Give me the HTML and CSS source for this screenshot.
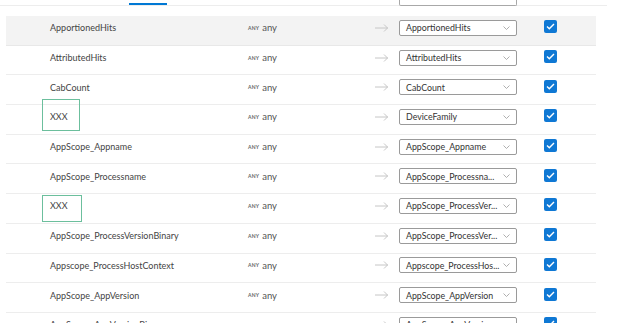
FILE: index.html
```html
<!DOCTYPE html>
<html lang="en">
<head>
    <meta charset="UTF-8">
    <title>Column mapping</title>
    <link rel="stylesheet" href="styles.css">
</head>
<body>
<div class="top-strip">
    <span class="tab-indicator"></span>
    <span class="select-stub"></span>
</div>
<div class="mapping">
    <div class="row selected">
        <div class="name">ApportionedHits</div>
        <div class="type"><span class="type-tag">ANY</span>any</div>
        <div class="arrow"><svg width="14" height="8" viewBox="0 0 14 8"><path d="M0 4h13M9 0.5l3.5 3.5-3.5 3.5" fill="none" stroke="#c6c6c6" stroke-width="1"/></svg></div>
        <div class="select"><span class="select-text">ApportionedHits</span><svg class="chevron" width="7" height="4" viewBox="0 0 7 4"><path d="M0.5 0.5l3 3 3-3" fill="none" stroke="#a6a6a6" stroke-width="0.9"/></svg></div>
        <div class="check"><svg width="9" height="7" viewBox="0 0 9 7"><path d="M1 3.6l2.3 2.2L8 1" fill="none" stroke="#fff" stroke-width="1.4"/></svg></div>
    </div>
    <div class="row">
        <div class="name">AttributedHits</div>
        <div class="type"><span class="type-tag">ANY</span>any</div>
        <div class="arrow"><svg width="14" height="8" viewBox="0 0 14 8"><path d="M0 4h13M9 0.5l3.5 3.5-3.5 3.5" fill="none" stroke="#c6c6c6" stroke-width="1"/></svg></div>
        <div class="select"><span class="select-text">AttributedHits</span><svg class="chevron" width="7" height="4" viewBox="0 0 7 4"><path d="M0.5 0.5l3 3 3-3" fill="none" stroke="#a6a6a6" stroke-width="0.9"/></svg></div>
        <div class="check"><svg width="9" height="7" viewBox="0 0 9 7"><path d="M1 3.6l2.3 2.2L8 1" fill="none" stroke="#fff" stroke-width="1.4"/></svg></div>
    </div>
    <div class="row">
        <div class="name">CabCount</div>
        <div class="type"><span class="type-tag">ANY</span>any</div>
        <div class="arrow"><svg width="14" height="8" viewBox="0 0 14 8"><path d="M0 4h13M9 0.5l3.5 3.5-3.5 3.5" fill="none" stroke="#c6c6c6" stroke-width="1"/></svg></div>
        <div class="select"><span class="select-text">CabCount</span><svg class="chevron" width="7" height="4" viewBox="0 0 7 4"><path d="M0.5 0.5l3 3 3-3" fill="none" stroke="#a6a6a6" stroke-width="0.9"/></svg></div>
        <div class="check"><svg width="9" height="7" viewBox="0 0 9 7"><path d="M1 3.6l2.3 2.2L8 1" fill="none" stroke="#fff" stroke-width="1.4"/></svg></div>
    </div>
    <div class="row">
        <div class="name">XXX<span class="mask mask-tall"></span></div>
        <div class="type"><span class="type-tag">ANY</span>any</div>
        <div class="arrow"><svg width="14" height="8" viewBox="0 0 14 8"><path d="M0 4h13M9 0.5l3.5 3.5-3.5 3.5" fill="none" stroke="#c6c6c6" stroke-width="1"/></svg></div>
        <div class="select"><span class="select-text">DeviceFamily</span><svg class="chevron" width="7" height="4" viewBox="0 0 7 4"><path d="M0.5 0.5l3 3 3-3" fill="none" stroke="#a6a6a6" stroke-width="0.9"/></svg></div>
        <div class="check"><svg width="9" height="7" viewBox="0 0 9 7"><path d="M1 3.6l2.3 2.2L8 1" fill="none" stroke="#fff" stroke-width="1.4"/></svg></div>
    </div>
    <div class="row">
        <div class="name">AppScope_Appname</div>
        <div class="type"><span class="type-tag">ANY</span>any</div>
        <div class="arrow"><svg width="14" height="8" viewBox="0 0 14 8"><path d="M0 4h13M9 0.5l3.5 3.5-3.5 3.5" fill="none" stroke="#c6c6c6" stroke-width="1"/></svg></div>
        <div class="select"><span class="select-text">AppScope_Appname</span><svg class="chevron" width="7" height="4" viewBox="0 0 7 4"><path d="M0.5 0.5l3 3 3-3" fill="none" stroke="#a6a6a6" stroke-width="0.9"/></svg></div>
        <div class="check"><svg width="9" height="7" viewBox="0 0 9 7"><path d="M1 3.6l2.3 2.2L8 1" fill="none" stroke="#fff" stroke-width="1.4"/></svg></div>
    </div>
    <div class="row">
        <div class="name">AppScope_Processname</div>
        <div class="type"><span class="type-tag">ANY</span>any</div>
        <div class="arrow"><svg width="14" height="8" viewBox="0 0 14 8"><path d="M0 4h13M9 0.5l3.5 3.5-3.5 3.5" fill="none" stroke="#c6c6c6" stroke-width="1"/></svg></div>
        <div class="select"><span class="select-text">AppScope_Processna...</span><svg class="chevron" width="7" height="4" viewBox="0 0 7 4"><path d="M0.5 0.5l3 3 3-3" fill="none" stroke="#a6a6a6" stroke-width="0.9"/></svg></div>
        <div class="check"><svg width="9" height="7" viewBox="0 0 9 7"><path d="M1 3.6l2.3 2.2L8 1" fill="none" stroke="#fff" stroke-width="1.4"/></svg></div>
    </div>
    <div class="row">
        <div class="name">XXX<span class="mask mask-short"></span></div>
        <div class="type"><span class="type-tag">ANY</span>any</div>
        <div class="arrow"><svg width="14" height="8" viewBox="0 0 14 8"><path d="M0 4h13M9 0.5l3.5 3.5-3.5 3.5" fill="none" stroke="#c6c6c6" stroke-width="1"/></svg></div>
        <div class="select"><span class="select-text">AppScope_ProcessVer...</span><svg class="chevron" width="7" height="4" viewBox="0 0 7 4"><path d="M0.5 0.5l3 3 3-3" fill="none" stroke="#a6a6a6" stroke-width="0.9"/></svg></div>
        <div class="check"><svg width="9" height="7" viewBox="0 0 9 7"><path d="M1 3.6l2.3 2.2L8 1" fill="none" stroke="#fff" stroke-width="1.4"/></svg></div>
    </div>
    <div class="row">
        <div class="name">AppScope_ProcessVersionBinary</div>
        <div class="type"><span class="type-tag">ANY</span>any</div>
        <div class="arrow"><svg width="14" height="8" viewBox="0 0 14 8"><path d="M0 4h13M9 0.5l3.5 3.5-3.5 3.5" fill="none" stroke="#c6c6c6" stroke-width="1"/></svg></div>
        <div class="select"><span class="select-text">AppScope_ProcessVer...</span><svg class="chevron" width="7" height="4" viewBox="0 0 7 4"><path d="M0.5 0.5l3 3 3-3" fill="none" stroke="#a6a6a6" stroke-width="0.9"/></svg></div>
        <div class="check"><svg width="9" height="7" viewBox="0 0 9 7"><path d="M1 3.6l2.3 2.2L8 1" fill="none" stroke="#fff" stroke-width="1.4"/></svg></div>
    </div>
    <div class="row">
        <div class="name">Appscope_ProcessHostContext</div>
        <div class="type"><span class="type-tag">ANY</span>any</div>
        <div class="arrow"><svg width="14" height="8" viewBox="0 0 14 8"><path d="M0 4h13M9 0.5l3.5 3.5-3.5 3.5" fill="none" stroke="#c6c6c6" stroke-width="1"/></svg></div>
        <div class="select"><span class="select-text">Appscope_ProcessHos...</span><svg class="chevron" width="7" height="4" viewBox="0 0 7 4"><path d="M0.5 0.5l3 3 3-3" fill="none" stroke="#a6a6a6" stroke-width="0.9"/></svg></div>
        <div class="check"><svg width="9" height="7" viewBox="0 0 9 7"><path d="M1 3.6l2.3 2.2L8 1" fill="none" stroke="#fff" stroke-width="1.4"/></svg></div>
    </div>
    <div class="row">
        <div class="name">AppScope_AppVersion</div>
        <div class="type"><span class="type-tag">ANY</span>any</div>
        <div class="arrow"><svg width="14" height="8" viewBox="0 0 14 8"><path d="M0 4h13M9 0.5l3.5 3.5-3.5 3.5" fill="none" stroke="#c6c6c6" stroke-width="1"/></svg></div>
        <div class="select"><span class="select-text">AppScope_AppVersion</span><svg class="chevron" width="7" height="4" viewBox="0 0 7 4"><path d="M0.5 0.5l3 3 3-3" fill="none" stroke="#a6a6a6" stroke-width="0.9"/></svg></div>
        <div class="check"><svg width="9" height="7" viewBox="0 0 9 7"><path d="M1 3.6l2.3 2.2L8 1" fill="none" stroke="#fff" stroke-width="1.4"/></svg></div>
    </div>
    <div class="row">
        <div class="name">AppScope_AppVersionBinary</div>
        <div class="type"><span class="type-tag">ANY</span>any</div>
        <div class="arrow"><svg width="14" height="8" viewBox="0 0 14 8"><path d="M0 4h13M9 0.5l3.5 3.5-3.5 3.5" fill="none" stroke="#c6c6c6" stroke-width="1"/></svg></div>
        <div class="select"><span class="select-text">AppScope_AppVersio...</span><svg class="chevron" width="7" height="4" viewBox="0 0 7 4"><path d="M0.5 0.5l3 3 3-3" fill="none" stroke="#a6a6a6" stroke-width="0.9"/></svg></div>
        <div class="check"><svg width="9" height="7" viewBox="0 0 9 7"><path d="M1 3.6l2.3 2.2L8 1" fill="none" stroke="#fff" stroke-width="1.4"/></svg></div>
    </div>
</div>
</body>
</html>
```

FILE: styles.css
```css
* {
    margin: 0;
    padding: 0;
    box-sizing: border-box;
}

html, body {
    height: 100%;
    overflow: hidden;
}

body {
    font-family: Lato, 'Open Sans', sans-serif;
    font-size: 9px;
    color: #3b3a39;
    background-color: white;
}

.top-strip {
    position: relative;
    width: 607px;
    height: 6px;
    border-bottom: 1px solid #ededed;
    margin-bottom: 10px;
}

.tab-indicator {
    position: absolute;
    left: 129px;
    top: 3px;
    width: 38px;
    height: 2px;
    background: #0078d4;
}

.select-stub {
    position: absolute;
    left: 399px;
    top: 0;
    width: 118px;
    height: 6px;
    border: 1px solid #a8a8a8;
    border-top: none;
    border-radius: 0 0 2px 2px;
}

.mapping {
    margin-left: 6px;
    width: 590px;
}

.row {
    display: grid;
    grid-template-columns: 198px 127px 24px 118px 27px 13px;
    align-items: center;
    height: 29.7px;
    padding: 0 0 5px 44px;
    border-bottom: 1px solid #ededed;
}

.row.selected {
    background-color: #f3f3f3;
    border-bottom-color: #e8e8e8;
}

.name {
    position: relative;
    white-space: nowrap;
    color: #444;
}

.mask {
    position: absolute;
    left: -8px;
    border: 1px solid #6cbf9d;
}

.mask-tall {
    top: -12px;
    width: 38px;
    height: 32px;
}

.mask-short {
    top: -5px;
    width: 40px;
    height: 27px;
}

.type {
    display: flex;
    align-items: center;
    gap: 3px;
    color: #555;
    font-size: 9.5px;
}

.type-tag {
    font-size: 5px;
    font-weight: 700;
    color: #666;
    letter-spacing: 0.2px;
}

.arrow {
    display: flex;
    align-items: center;
}

.select {
    display: flex;
    align-items: center;
    justify-content: space-between;
    height: 16px;
    padding: 0 6px 0 6px;
    border: 1px solid #9a9a9a;
    border-radius: 2px;
    color: #333;
    background: white;
    white-space: nowrap;
    overflow: hidden;
    font-size: 8.8px;
}

.chevron {
    flex-shrink: 0;
}

.check {
    grid-column: 6;
    display: flex;
    align-items: center;
    justify-content: center;
    width: 13px;
    height: 13px;
    margin-bottom: 2px;
    background: #0f78d4;
    border-radius: 2px;
}
```
